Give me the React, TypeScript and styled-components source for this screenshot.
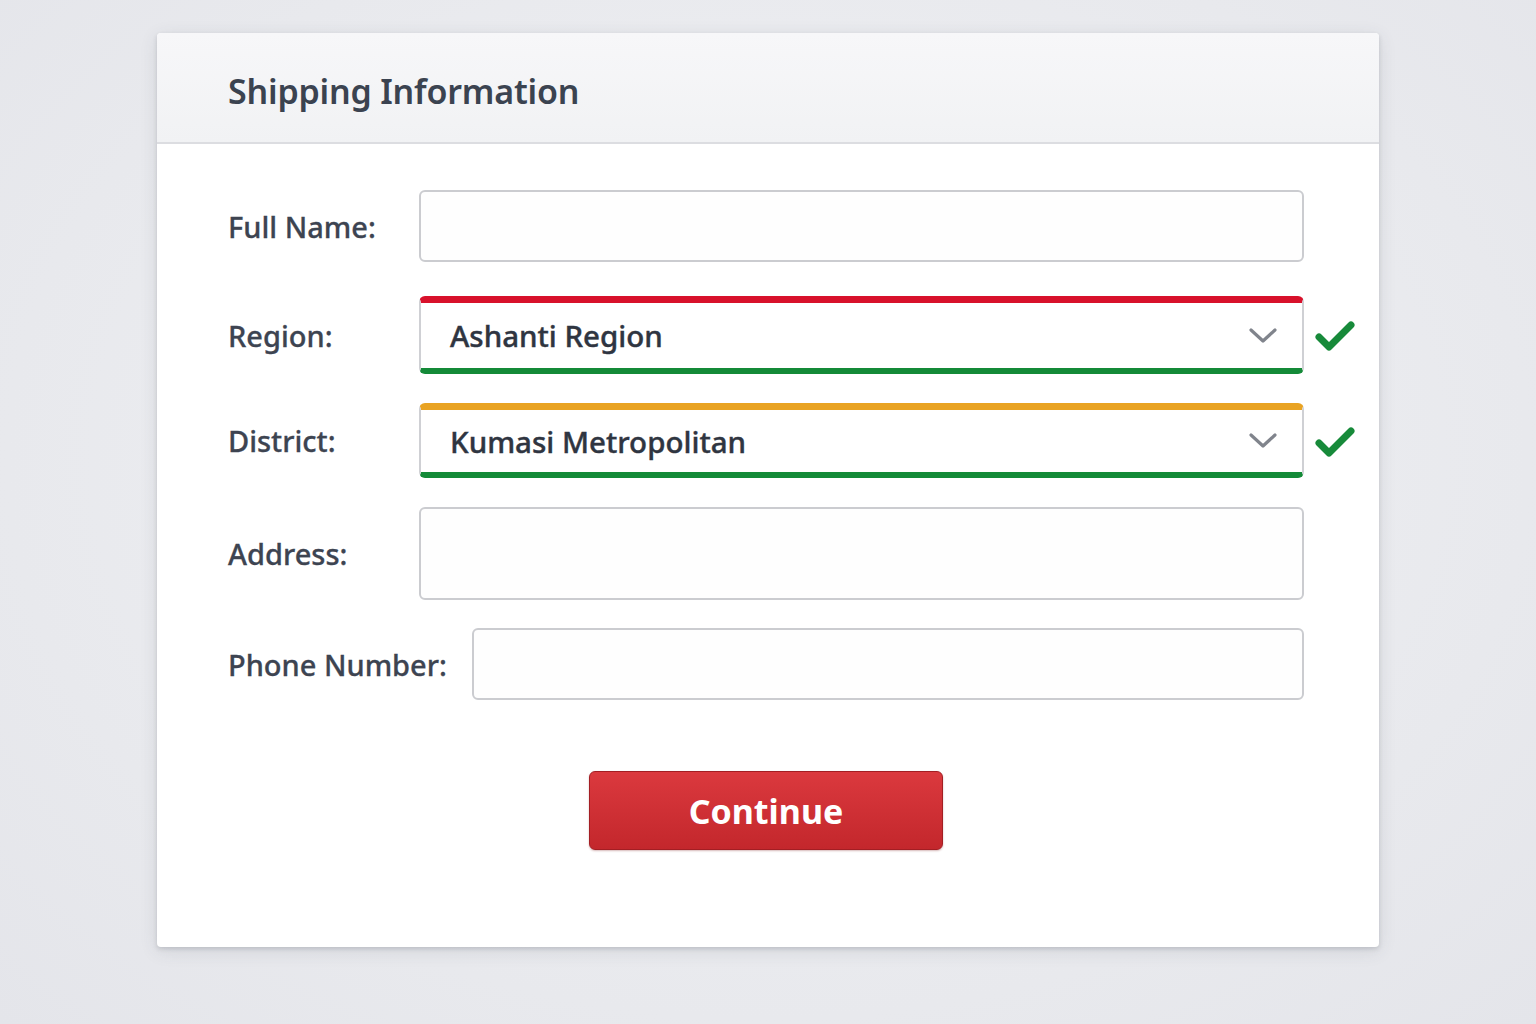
import styled, { createGlobalStyle } from 'styled-components';

const GlobalStyle = createGlobalStyle`
  html, body {
    margin: 0;
    padding: 0;
    background: #e9eaee;
  }
  body {
    font-family: "Noto Sans", "Open Sans", sans-serif;
  }
`;

const Page = styled.div`
  min-height: 1024px;
  padding-top: 33px;
  box-sizing: border-box;
  display: flex;
  justify-content: center;
  align-items: flex-start;
  background: radial-gradient(ellipse at 50% 45%, #f1f2f5 0%, #e8e9ed 70%, #e4e5ea 100%);
`;

const Card = styled.div`
  width: 1222px;
  background: #ffffff;
  border-radius: 4px;
  box-shadow: 0 2px 4px rgba(60, 64, 80, 0.18), 0 4px 18px rgba(60, 64, 80, 0.12);
  overflow: hidden;
`;

const Header = styled.div`
  height: 111px;
  box-sizing: border-box;
  padding: 7px 71px 0;
  display: flex;
  align-items: center;
  background: linear-gradient(#f7f7f9, #f1f2f4);
  border-bottom: 2px solid #dcdde1;
`;

const Title = styled.h1`
  margin: 0;
  font-size: 34px;
  font-weight: 600;
  color: #3b4350;
  letter-spacing: -0.2px;
`;

const Body = styled.div`
  padding: 46px 75px 97px 71px;
  display: flex;
  flex-direction: column;
`;

const Row = styled.div<{ $gap: number }>`
  position: relative;
  display: flex;
  align-items: center;
  margin-bottom: ${({ $gap }) => $gap}px;
`;

const Label = styled.label`
  min-width: 166px;
  margin-right: 25px;
  font-size: 29px;
  font-weight: 500;
  color: #3d4451;
  white-space: nowrap;
  -webkit-text-stroke: 0.3px #3d4451;
`;

const TextBox = styled.input<{ $h: number }>`
  flex: 1;
  height: ${({ $h }) => $h}px;
  box-sizing: border-box;
  border: 2px solid #cbccd0;
  border-radius: 6px;
  background: #fefefe;
  font: inherit;
  font-size: 28px;
  padding: 0 28px;
  outline: none;
`;

const SelectBox = styled.div<{ $top: string; $h: number }>`
  flex: 1;
  height: ${({ $h }) => $h}px;
  box-sizing: border-box;
  border: 2px solid #cfd0d4;
  border-top: 7px solid ${({ $top }) => $top};
  border-bottom: 6px solid #148a38;
  border-radius: 6px;
  background: #ffffff;
  display: flex;
  align-items: center;
  justify-content: space-between;
  padding: 0 24px 0 29px;
`;

const SelectValue = styled.span`
  font-size: 29.5px;
  font-weight: 500;
  color: #2f3541;
  -webkit-text-stroke: 0.4px #2f3541;
`;

const Check = styled.svg`
  position: absolute;
  right: -52px;
  top: 50%;
  transform: translateY(-44%);
`;

const Actions = styled.div`
  display: flex;
  justify-content: center;
  padding-top: 71px;
`;

const Button = styled.button`
  width: 354px;
  height: 79px;
  border: 1px solid #a31e23;
  border-radius: 6px;
  background: linear-gradient(#db393e, #c3272c);
  color: #ffffff;
  font-family: inherit;
  font-size: 34px;
  font-weight: 700;
  box-shadow: 0 1px 2px rgba(120, 20, 20, 0.3);
  cursor: pointer;
`;

const Chevron = () => (
  <svg width="30" height="20" viewBox="0 0 30 20">
    <path d="M3 4 L15 15 L27 4" fill="none" stroke="#80848c" strokeWidth="3.2" strokeLinecap="round" strokeLinejoin="round" />
  </svg>
);

const CheckMark = () => (
  <Check width="42" height="34" viewBox="0 0 42 34">
    <path d="M5 17 L15 27 L37 5" fill="none" stroke="#178a3a" strokeWidth="7" strokeLinecap="round" strokeLinejoin="round" />
  </Check>
);

export default function App() {
  return (
    <>
      <GlobalStyle />
      <Page>
        <Card>
          <Header>
            <Title>Shipping Information</Title>
          </Header>
          <Body>
            <Row $gap={34}>
              <Label>Full Name:</Label>
              <TextBox $h={72} />
            </Row>
            <Row $gap={29}>
              <Label>Region:</Label>
              <SelectBox $top="#d8112b" $h={78}>
                <SelectValue>Ashanti Region</SelectValue>
                <Chevron />
              </SelectBox>
              <CheckMark />
            </Row>
            <Row $gap={29}>
              <Label>District:</Label>
              <SelectBox $top="#e9a323" $h={75}>
                <SelectValue>Kumasi Metropolitan</SelectValue>
                <Chevron />
              </SelectBox>
              <CheckMark />
            </Row>
            <Row $gap={28}>
              <Label>Address:</Label>
              <TextBox $h={93} />
            </Row>
            <Row $gap={0}>
              <Label>Phone Number:</Label>
              <TextBox $h={72} />
            </Row>
            <Actions>
              <Button>Continue</Button>
            </Actions>
          </Body>
        </Card>
      </Page>
    </>
  );
}
